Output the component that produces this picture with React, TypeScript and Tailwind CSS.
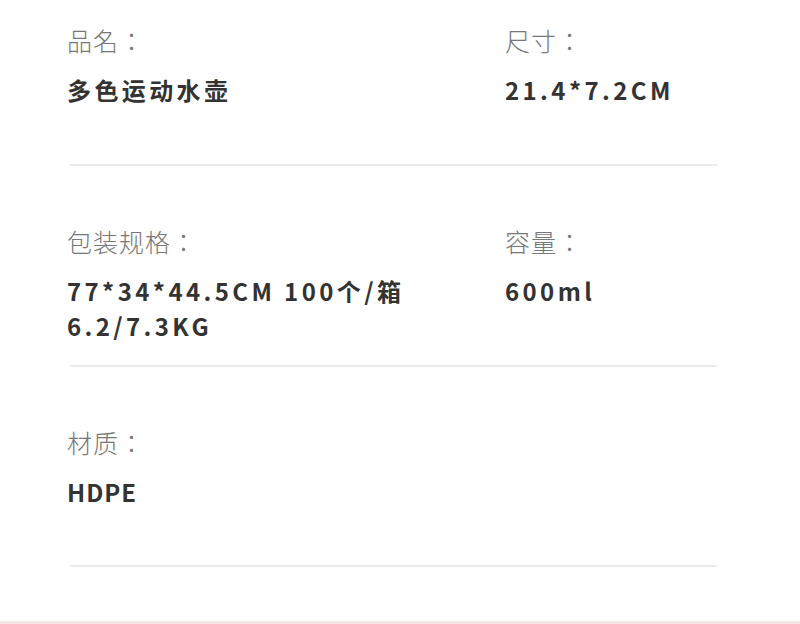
import React from "react";

const font = { fontFamily: '"Noto Sans CJK SC", "Noto Sans", sans-serif' };

function Label({ children }: { children: React.ReactNode }) {
  return (
    <div
      className="text-[25px] leading-[32px] font-light text-[#787878] tracking-[1px]"
      style={{ fontFamily: '"Noto Sans CJK TC", "Noto Sans CJK SC", sans-serif' }}
    >
      {children}
    </div>
  );
}

function Value({ children, tight }: { children: React.ReactNode; tight?: boolean }) {
  return (
    <div
      className={
        "mt-[16px] text-[24px] leading-[35px] font-bold text-[#333333] " +
        (tight ? "tracking-[1px]" : "tracking-[3.4px]")
      }
    >
      {children}
    </div>
  );
}

function Divider() {
  return <div className="ml-[70px] w-[647px] h-[2px] bg-[#ebebeb]" />;
}

export default function App() {
  return (
    <div className="w-[800px] h-[624px] bg-white flex flex-col overflow-hidden" style={font}>
      <div className="h-[164px] pt-[24px] pl-[67px] flex">
        <div className="w-[438px]">
          <Label>品名：</Label>
          <Value>多色运动水壶</Value>
        </div>
        <div>
          <Label>尺寸：</Label>
          <Value>21.4*7.2CM</Value>
        </div>
      </div>
      <Divider />
      <div className="h-[199px] pt-[59px] pl-[67px] flex">
        <div className="w-[438px]">
          <Label>包装规格：</Label>
          <Value>
            77*34*44.5CM 100个/箱
            <br />
            6.2/7.3KG
          </Value>
        </div>
        <div>
          <Label>容量：</Label>
          <Value>600ml</Value>
        </div>
      </div>
      <Divider />
      <div className="h-[198px] pt-[59px] pl-[67px] flex">
        <div className="w-[438px]">
          <Label>材质：</Label>
          <Value tight>HDPE</Value>
        </div>
      </div>
      <Divider />
      <div className="flex-1" />
      <div className="h-[3px] bg-[#f3e4e6]" />
    </div>
  );
}
